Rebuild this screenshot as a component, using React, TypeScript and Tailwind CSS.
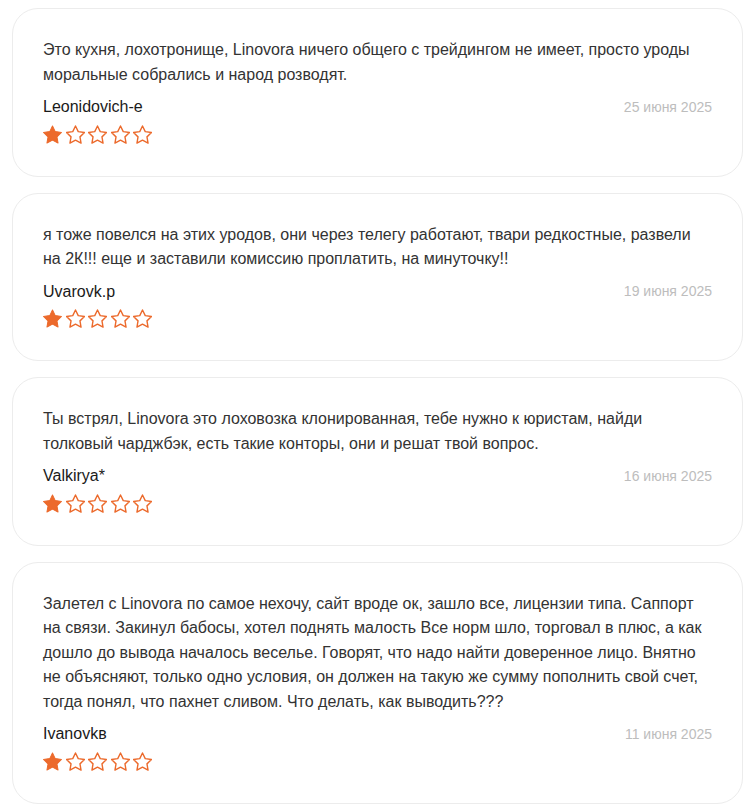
import React from "react";

const reviews = [
  {
    text: "Это кухня, лохотронище, Linovora ничего общего с трейдингом не имеет, просто уроды моральные собрались и народ розводят.",
    name: "Leonidovich-e",
    date: "25 июня 2025",
  },
  {
    text: "я тоже повелся на этих уродов, они через телегу работают, твари редкостные, развели на 2К!!! еще и заставили комиссию проплатить, на минуточку!!",
    name: "Uvarovk.p",
    date: "19 июня 2025",
  },
  {
    text: "Ты встрял, Linovora это лоховозка клонированная, тебе нужно к юристам, найди толковый чарджбэк, есть такие конторы, они и решат твой вопрос.",
    name: "Valkirya*",
    date: "16 июня 2025",
  },
  {
    text: "Залетел с Linovora по самое нехочу, сайт вроде ок, зашло все, лицензии типа. Саппорт на связи. Закинул бабосы, хотел поднять малость Все норм шло, торговал в плюс, а как дошло до вывода началось веселье. Говорят, что надо найти доверенное лицо. Внятно не объясняют, только одно условия, он должен на такую же сумму пополнить свой счет, тогда понял, что пахнет сливом. Что делать, как выводить???",
    name: "Ivanovkв",
    date: "11 июня 2025",
  },
];

const STAR = "M12 2.2l2.95 6.1 6.7.95-4.85 4.7 1.15 6.65L12 17.45 6.05 20.6 7.2 13.95 2.35 9.25l6.7-.95L12 2.2z";

function Stars({ rating }: { rating: number }) {
  return (
    <div className="flex items-center gap-[3.5px] h-[24px]">
      {[0, 1, 2, 3, 4].map((i) => (
        <svg key={i} width="19" height="19" viewBox="1.8 1.6 20.4 19.6">
          {i < rating ? (
            <path d={STAR} fill="#ec6a2c" stroke="#ec6a2c" strokeWidth="1.1" strokeLinejoin="round" />
          ) : (
            <path d={STAR} fill="none" stroke="#ec6a2c" strokeWidth="1.5" strokeLinejoin="round" />
          )}
        </svg>
      ))}
    </div>
  );
}

export default function App() {
  return (
    <div
      className="bg-white px-[12px] pt-[8px] pb-[8px] flex flex-col gap-[16px]"
      style={{ fontFamily: '"Liberation Sans", Arial, sans-serif' }}
    >
      {reviews.map((r, idx) => (
        <div key={idx} className="rounded-[26px] border border-[#ececec] bg-white px-[30px] pt-[29px] pb-[29.5px]">
          <p className="text-[16px] leading-[24.5px] text-[#333]">{r.text}</p>
          <div className="mt-[8px] flex items-center justify-between h-[24px]">
            <span className="text-[16px] text-[#1a1a1a]">{r.name}</span>
            <span className="text-[14px] text-[#bdbdbd]">{r.date}</span>
          </div>
          <div className="mt-[3px]">
            <Stars rating={1} />
          </div>
        </div>
      ))}
    </div>
  );
}
